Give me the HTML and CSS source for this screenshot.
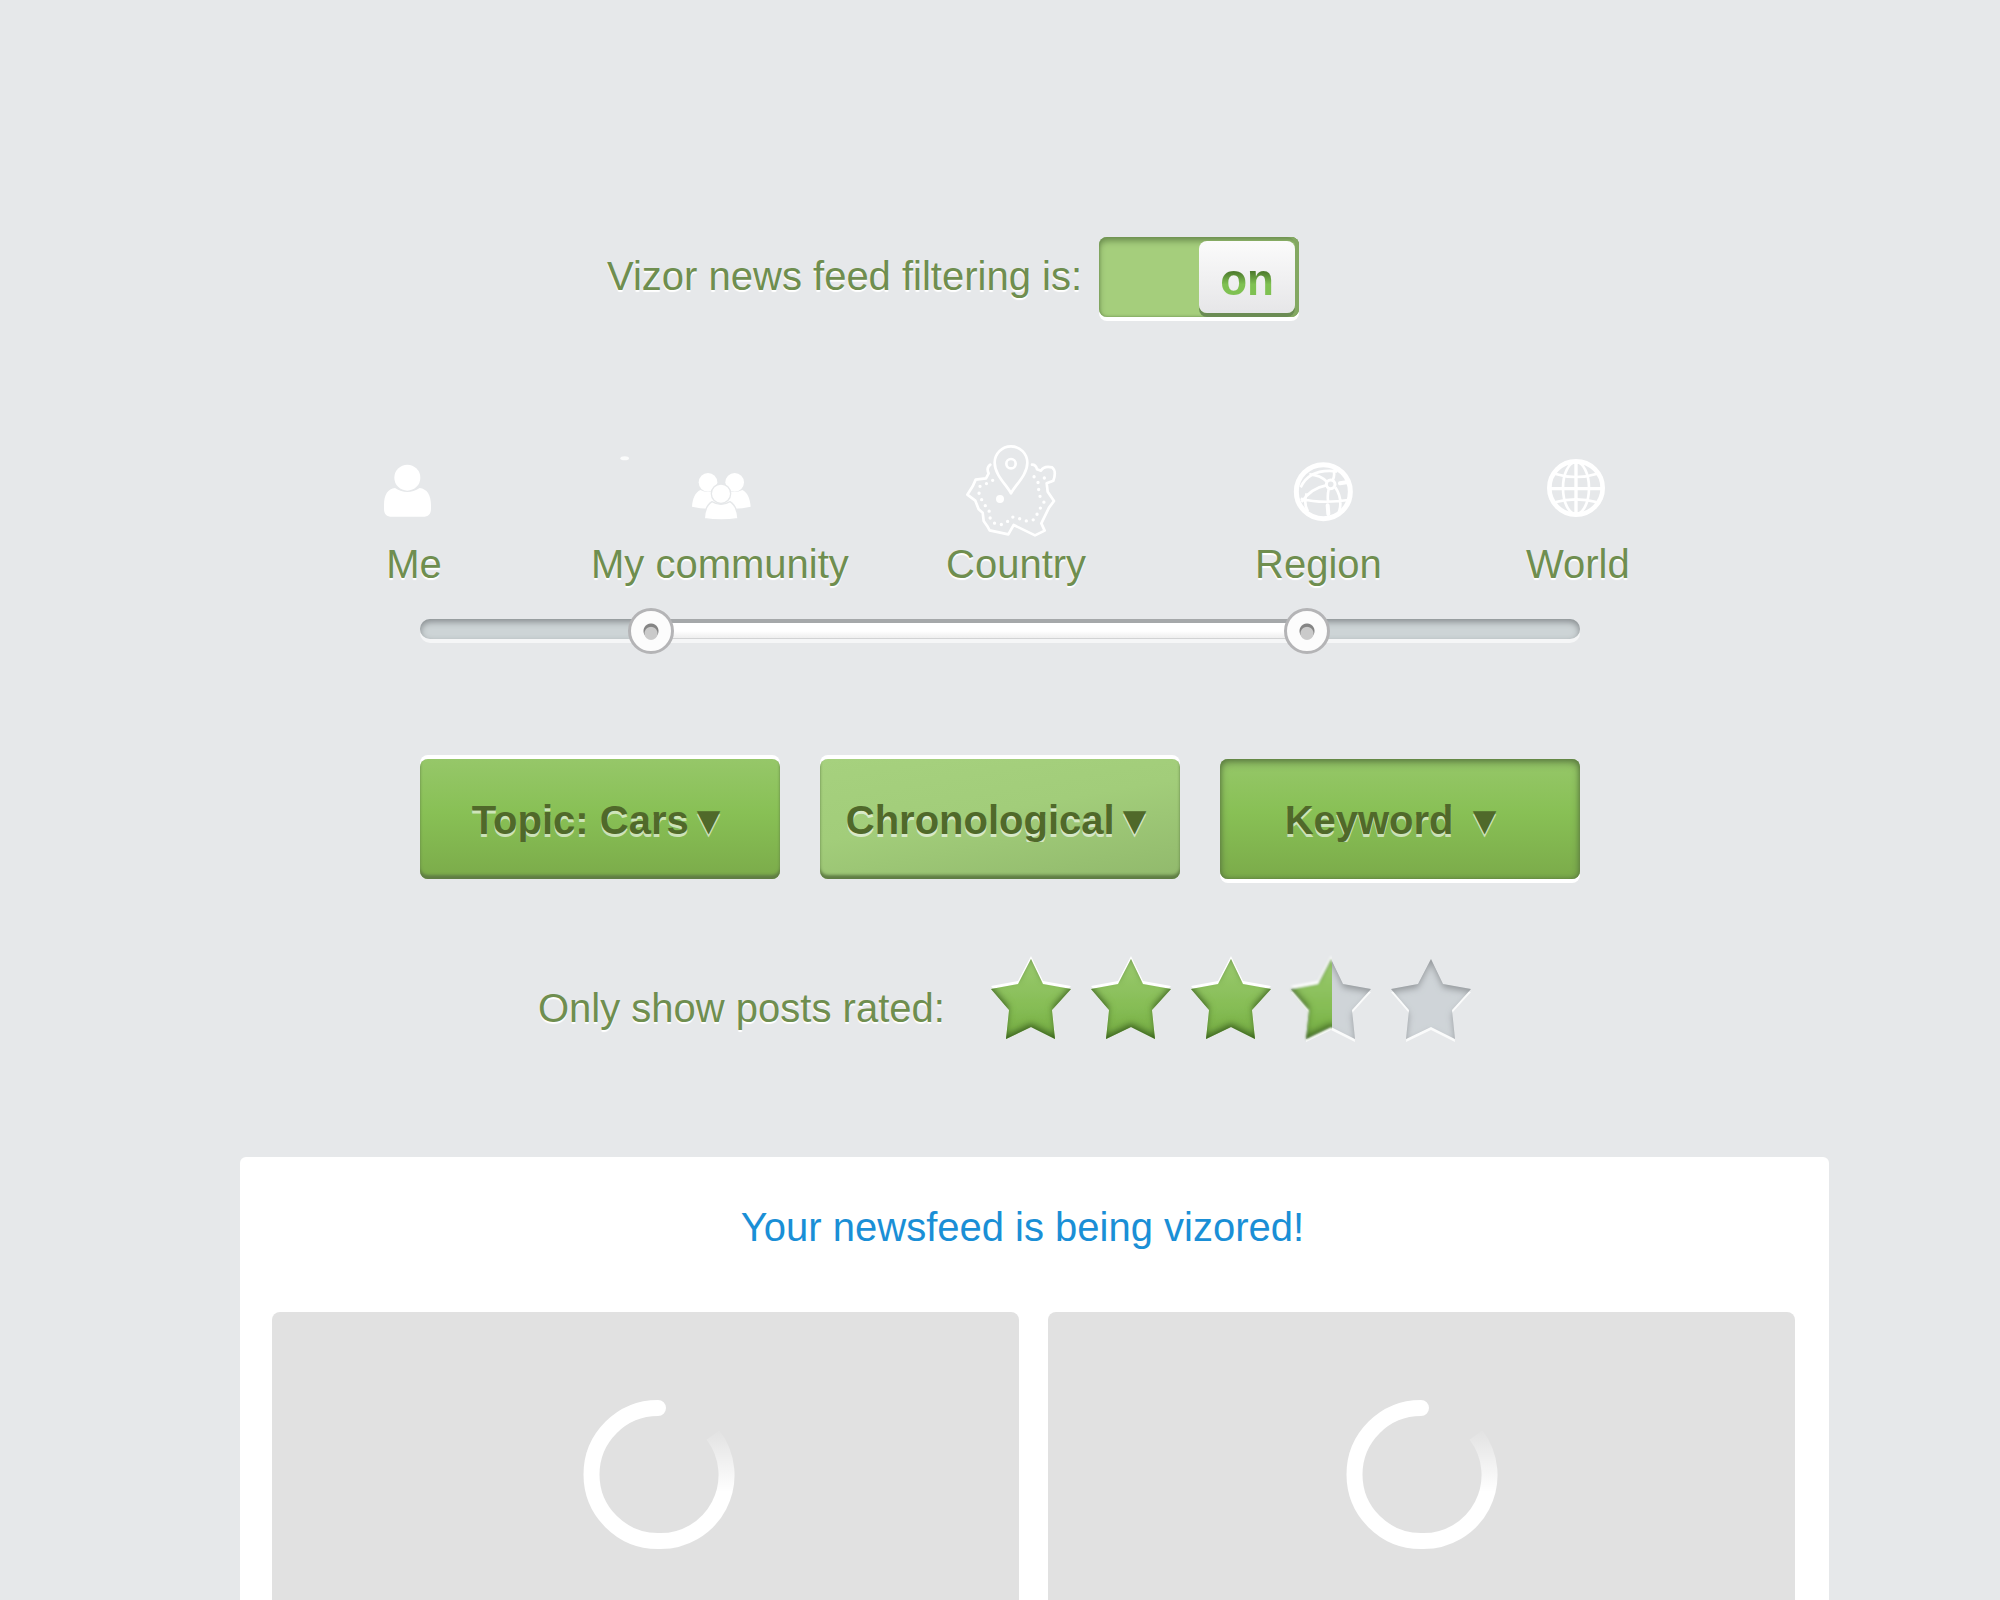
FILE: index.html
```html
<!DOCTYPE html>
<html lang="en">
<head>
  <meta charset="UTF-8" />
  <meta name="viewport" content="width=device-width, initial-scale=1.0" />
  <title>Vizor</title>
  <link rel="stylesheet" href="styles.css">
</head>
<body>
<!-- Shared gradients and filters -->
<svg class="defs" width="0" height="0" aria-hidden="true">
  <defs>
    <linearGradient id="starGreen" x1="0" y1="0" x2="0" y2="1">
      <stop offset="0" stop-color="#9bca70" />
      <stop offset="0.6" stop-color="#86bd55" />
      <stop offset="1" stop-color="#74ac43" />
    </linearGradient>
    <linearGradient id="fade" gradientUnits="userSpaceOnUse" x1="0" y1="28" x2="0" y2="92">
      <stop offset="0" stop-color="#fff" stop-opacity="0" />
      <stop offset="1" stop-color="#fff" />
    </linearGradient>
    <filter id="innerBottom" x="-10%" y="-10%" width="120%" height="120%">
      <feOffset in="SourceAlpha" dy="-4" />
      <feGaussianBlur stdDeviation="3" result="moved" />
      <feFlood flood-color="#33591a" flood-opacity="0.9" />
      <feComposite in2="moved" operator="out" />
      <feComposite in2="SourceAlpha" operator="in" result="shade" />
      <feMerge><feMergeNode in="SourceGraphic" /><feMergeNode in="shade" /></feMerge>
    </filter>
    <filter id="innerTop" x="-10%" y="-10%" width="120%" height="120%">
      <feOffset in="SourceAlpha" dy="4" />
      <feGaussianBlur stdDeviation="3" result="moved" />
      <feFlood flood-color="#85898c" flood-opacity="0.8" />
      <feComposite in2="moved" operator="out" />
      <feComposite in2="SourceAlpha" operator="in" result="shade" />
      <feMerge><feMergeNode in="SourceGraphic" /><feMergeNode in="shade" /></feMerge>
    </filter>
    <filter id="soft"><feGaussianBlur stdDeviation="1" /></filter>
    <clipPath id="leftHalf"><rect x="-8" y="-8" width="49" height="96" /></clipPath>
    <path id="star" d="M40 0 52 25 80 30 61 51 64 80 40 68 15 80 18 51 0 30 27 25Z" />
    <g id="fullStar">
      <use href="#star" y="-3" fill="#fff" />
      <use href="#star" fill="url(#starGreen)" filter="url(#innerBottom)" />
    </g>
    <g id="emptyStar">
      <use href="#star" y="3" fill="#fff" opacity="0.8" />
      <use href="#star" fill="#cfd4d8" filter="url(#innerTop)" />
    </g>
    <g id="ring" fill="none" stroke-width="16">
      <path d="M74 141A66 66 0 0 0 129 35" stroke="url(#fade)" />
      <path d="M74 8A66 66 0 1 0 74 141" stroke="#fff" stroke-linecap="round" />
    </g>
  </defs>
</svg>

<main class="controls">
  <div class="filter-row">
    <label for="filtering">Vizor news feed filtering is:</label>
    <div class="switch">
      <input type="checkbox" id="filtering" checked />
      <span class="knob"><span>on</span></span>
    </div>
  </div>

  <!-- Audience range -->
  <div class="scale">
    <div class="stop">
      <svg viewBox="12 30 300 300" width="100" height="100" fill="#fff">
        <circle cx="142" cy="143" r="39" />
        <path d="M72 226c0-33 12-50 33-52q37 24 74 0c22 3 34 20 34 52v10c0 16-8 24-24 24h-93c-16 0-24-8-24-24z" />
      </svg>
      <span>Me</span>
    </div>
    <div class="stop">
      <svg viewBox="783 30 600 300" width="200" height="100" fill="#fff">
        <ellipse cx="797" cy="85" rx="13" ry="6" opacity="0.8" />
        <circle cx="1047" cy="157" r="28" />
        <circle cx="1127" cy="157" r="28" />
        <path d="M999 230c2-27 10-42 25-50q23 12 46 0l10 54q-42 6-81-4zM1175 230c-2-27-10-42-25-50q-23 12-46 0l-10 54q42 6 81-4z" />
        <path d="M1036 266c1-26 8-42 23-51q27 16 54 0c15 9 22 25 24 51q-50 8-101 0z" stroke="#e6e8ea" stroke-width="4" />
        <circle cx="1086" cy="191" r="29" stroke="#e6e8ea" stroke-width="4" />
      </svg>
      <span>My community</span>
    </div>
    <div class="stop">
      <svg viewBox="138 30 300 300" width="100" height="100" fill="none" stroke="#fff" stroke-width="8" stroke-linecap="round" stroke-linejoin="round">
        <path d="M273 190c-12-24-49-55-49-92a49 49 0 0 1 98 0c0 37-37 68-49 92z" />
        <circle cx="273" cy="101" r="14" />
        <circle cx="240" cy="207" r="8" fill="#fff" />
        <path d="M211 104c-11 8-9 18-5 26l-8 15-31 4-9 20-16 25 24 18 10 26 12 10 3 25 10 14 8 14 56 12 16-28 64 31 29-14-10-22 23-47 15-20-19-28-3-25 20-8c7-19 6-32-4-40-18-4-27-1-33 10l-12-4c-2-10-8-14-15-14" />
        <path d="M218 151 199 161 180 169 177 191 185 209 195 226 207 239 209 262 221 279 243 284 262 275 277 261 298 266 320 273 342 269 350 255 360 236 372 217 360 199 356 179 354 157 342 140M373 144h1" stroke-width="10" stroke-dasharray="0 21" />
      </svg>
      <span>Country</span>
    </div>
    <div class="stop">
      <svg viewBox="114 30 300 300" width="100" height="100" fill="none" stroke="#fff" stroke-width="8">
        <circle cx="280" cy="185" r="81" stroke-width="15" />
        <circle cx="302" cy="163" r="13" stroke-width="9" />
        <path d="M290 155q-18-20-52-22M308 150q8-14 2-32M212 172q26-58 110-48M289 166q-46 8-74 50M296 178q-4 18-2 34M316 172q24 38 10 76M212 206q60 16 144 4M230 190q-10 32 4 54" />
        <path d="M330 160l24-4M293 226l2 26" stroke-width="12" stroke-linecap="round" />
      </svg>
      <span>Region</span>
    </div>
    <div class="stop">
      <svg viewBox="894 30 300 300" width="100" height="100" fill="none" stroke="#fff" stroke-width="8">
        <circle cx="1038" cy="174" r="80" stroke-width="14" />
        <ellipse cx="1038" cy="174" rx="39" ry="78" />
        <path d="M1038 96v156M960 176h156" stroke-width="10" />
        <path d="M974 131q64 20 128 0M974 217q64-18 128 0" />
      </svg>
      <span>World</span>
    </div>
  </div>

  <div class="range">
    <div class="track">
      <div class="fill" style="margin-left: 20%; width: 56%"></div>
    </div>
    <input type="range" min="0" max="1000" value="187" aria-label="From" />
    <input type="range" min="0" max="1000" value="776" aria-label="To" />
  </div>

  <!-- Feed options -->
  <div class="options">
    <select class="option" aria-label="Topic">
      <option>Topic: Cars▼</option>
    </select>
    <select class="option light" aria-label="Order">
      <option>Chronological▼</option>
    </select>
    <select class="option pressed" aria-label="Search by">
      <option>Keyword ▼&nbsp;</option>
    </select>
  </div>

  <div class="rating-row">
    <span id="ratingLabel">Only show posts rated:</span>
    <div class="stars" role="group" aria-labelledby="ratingLabel">
      <button type="button" aria-label="1 star"><svg viewBox="0 0 80 80"><use href="#fullStar" /></svg></button>
      <button type="button" aria-label="2 stars"><svg viewBox="0 0 80 80"><use href="#fullStar" /></svg></button>
      <button type="button" aria-label="3 stars"><svg viewBox="0 0 80 80"><use href="#fullStar" /></svg></button>
      <button type="button" aria-label="4 stars">
        <svg viewBox="0 0 80 80">
          <use href="#emptyStar" />
          <g clip-path="url(#leftHalf)">
            <g filter="url(#soft)"><use href="#fullStar" /></g>
          </g>
        </svg>
      </button>
      <button type="button" aria-label="5 stars"><svg viewBox="0 0 80 80"><use href="#emptyStar" /></svg></button>
    </div>
  </div>
</main>

<!-- News feed -->
<section class="feed">
  <h2>Your newsfeed is being vizored!</h2>
  <div class="posts">
    <div class="post"><svg viewBox="0 0 149 149" width="149" height="149"><use href="#ring" /></svg></div>
    <div class="post"><svg viewBox="0 0 149 149" width="149" height="149"><use href="#ring" /></svg></div>
  </div>
</section>
</body>
</html>
```
FILE: styles.css
```css
/* Base Styles */
* {
  box-sizing: border-box;
}
body {
  font-family: "Liberation Sans", Arial, sans-serif;
  font-size: 40px;
  background-color: #e6e8ea;
  color: #6f8e4f;
  margin: 0;
  min-height: 100vh;
  display: flex;
  flex-direction: column;
}
.defs {
  position: absolute;
}
.controls {
  width: 100%;
  max-width: 1160px;
  margin: 0 auto;
  padding-top: 237px;
  text-shadow: 0 2px 1px #fff;
}

/* On / off switch */
.filter-row {
  display: flex;
  align-items: flex-start;
  gap: 17px;
  padding-left: 187px;
  line-height: 78px;
}
.switch {
  display: grid;
  width: 200px;
  height: 80px;
}
.switch input,
.knob {
  grid-area: 1 / 1;
}
.switch input {
  appearance: none;
  margin: 0;
  border-radius: 8px;
  background: #a5ce7c;
  box-shadow: inset -4px 0 0 #83a862, inset 0 4px 6px #6d8f50, inset 0 0 3px #6d8f50, 0 4px 0 #fff;
  cursor: pointer;
}
.knob {
  justify-self: end;
  width: 96px;
  height: 72px;
  margin: 4px 4px 0 0;
  border-radius: 8px;
  background: linear-gradient(#fbfbfb, #e6e6e8);
  box-shadow: 0 4px 0 #6b8c54;
  text-align: center;
  font-size: 44px;
  font-weight: bold;
  pointer-events: none;
}
.knob span {
  background: linear-gradient(#4f7d2f 35%, #7fc152 60%);
  background-clip: text;
  color: transparent;
  text-shadow: none;
}

/* Scale above the slider */
.scale {
  display: grid;
  grid-template-columns: 227fr 355fr 309fr 271fr 104fr;
  justify-items: start;
  margin: 123px -50px 0 -56px;
  line-height: 48px;
}
.stop {
  display: flex;
  flex-direction: column;
  align-items: center;
  white-space: nowrap;
}

/* Two-handled slider */
.range {
  display: grid;
  align-items: start;
  margin-top: 20px;
}
.range > * {
  grid-area: 1 / 1;
}
.track {
  height: 20px;
  margin-top: 11px;
  border-radius: 10px;
  background: #cdd4d6;
  box-shadow: inset 0 3px 6px #888d90, 0 4px 0 rgba(255, 255, 255, 0.6);
}
.fill {
  height: 20px;
  background: linear-gradient(#fff 60%, #ececec);
  box-shadow: inset 0 4px 0 #a5a8aa, inset 0 -1px 0 #d2d3d4;
}
.range input {
  appearance: none;
  width: 100%;
  height: 46px;
  margin: 0;
  background: none;
  pointer-events: none;
}
.range input::-webkit-slider-thumb {
  appearance: none;
  width: 46px;
  height: 46px;
  border: 3px solid #b4b4b6;
  border-radius: 50%;
  background: radial-gradient(circle at 50% 56%, #cacaca 6px, transparent 7px), radial-gradient(circle, #858585 7px, #fcfcfc 8px);
  pointer-events: auto;
  cursor: pointer;
}

/* Option drop-downs */
.options {
  display: grid;
  grid-template-columns: repeat(3, 1fr);
  gap: 40px;
  margin-top: 105px;
}
.option {
  appearance: none;
  height: 120px;
  padding: 2px 0 0;
  border: none;
  border-radius: 8px;
  background: linear-gradient(#96c769, #88c055 45%, #7bab4a);
  box-shadow: 0 -4px 0 #fff, inset 0 -4px 3px #5f7d44;
  font: bold 40px "Liberation Sans", Arial, sans-serif;
  color: #50692a;
  text-align-last: center;
  text-shadow: 0 3px 0 rgba(255, 255, 255, 0.6);
  cursor: pointer;
}
.option.light {
  background: linear-gradient(170deg, #a6d17e, #a2cd7a 45%, #91b96c);
}
.option.pressed {
  box-shadow: 0 4px 0 #fff, inset 0 3px 8px #5b7b40, inset 0 0 4px #5b7b40;
}

/* Rating */
.rating-row {
  display: flex;
  align-items: flex-start;
  gap: 46px;
  margin-top: 80px;
  padding-left: 118px;
  line-height: 98px;
}
.stars {
  display: flex;
  gap: 20px;
}
.stars button {
  width: 80px;
  height: 80px;
  padding: 0;
  border: none;
  background: none;
  cursor: pointer;
}
.stars svg {
  display: block;
  overflow: visible;
}

/* News feed */
.feed {
  flex: 1;
  display: flex;
  flex-direction: column;
  margin: 100px 171px 0 240px;
  padding: 47px 34px 0 32px;
  border-radius: 6px 6px 0 0;
  background: #fff;
}
.feed h2 {
  margin: 0 22px 62px 0;
  font-size: 40px;
  font-weight: normal;
  line-height: 46px;
  text-align: center;
  color: #1a8fd6;
}
.posts {
  flex: 1;
  display: grid;
  grid-template-columns: 1fr 1fr;
  gap: 29px;
}
.post {
  padding-top: 88px;
  border-radius: 8px 8px 0 0;
  background: #e1e1e1;
  text-align: center;
}
.post svg {
  overflow: visible;
}
.post:first-child {
  padding-left: 26px;
}
```
